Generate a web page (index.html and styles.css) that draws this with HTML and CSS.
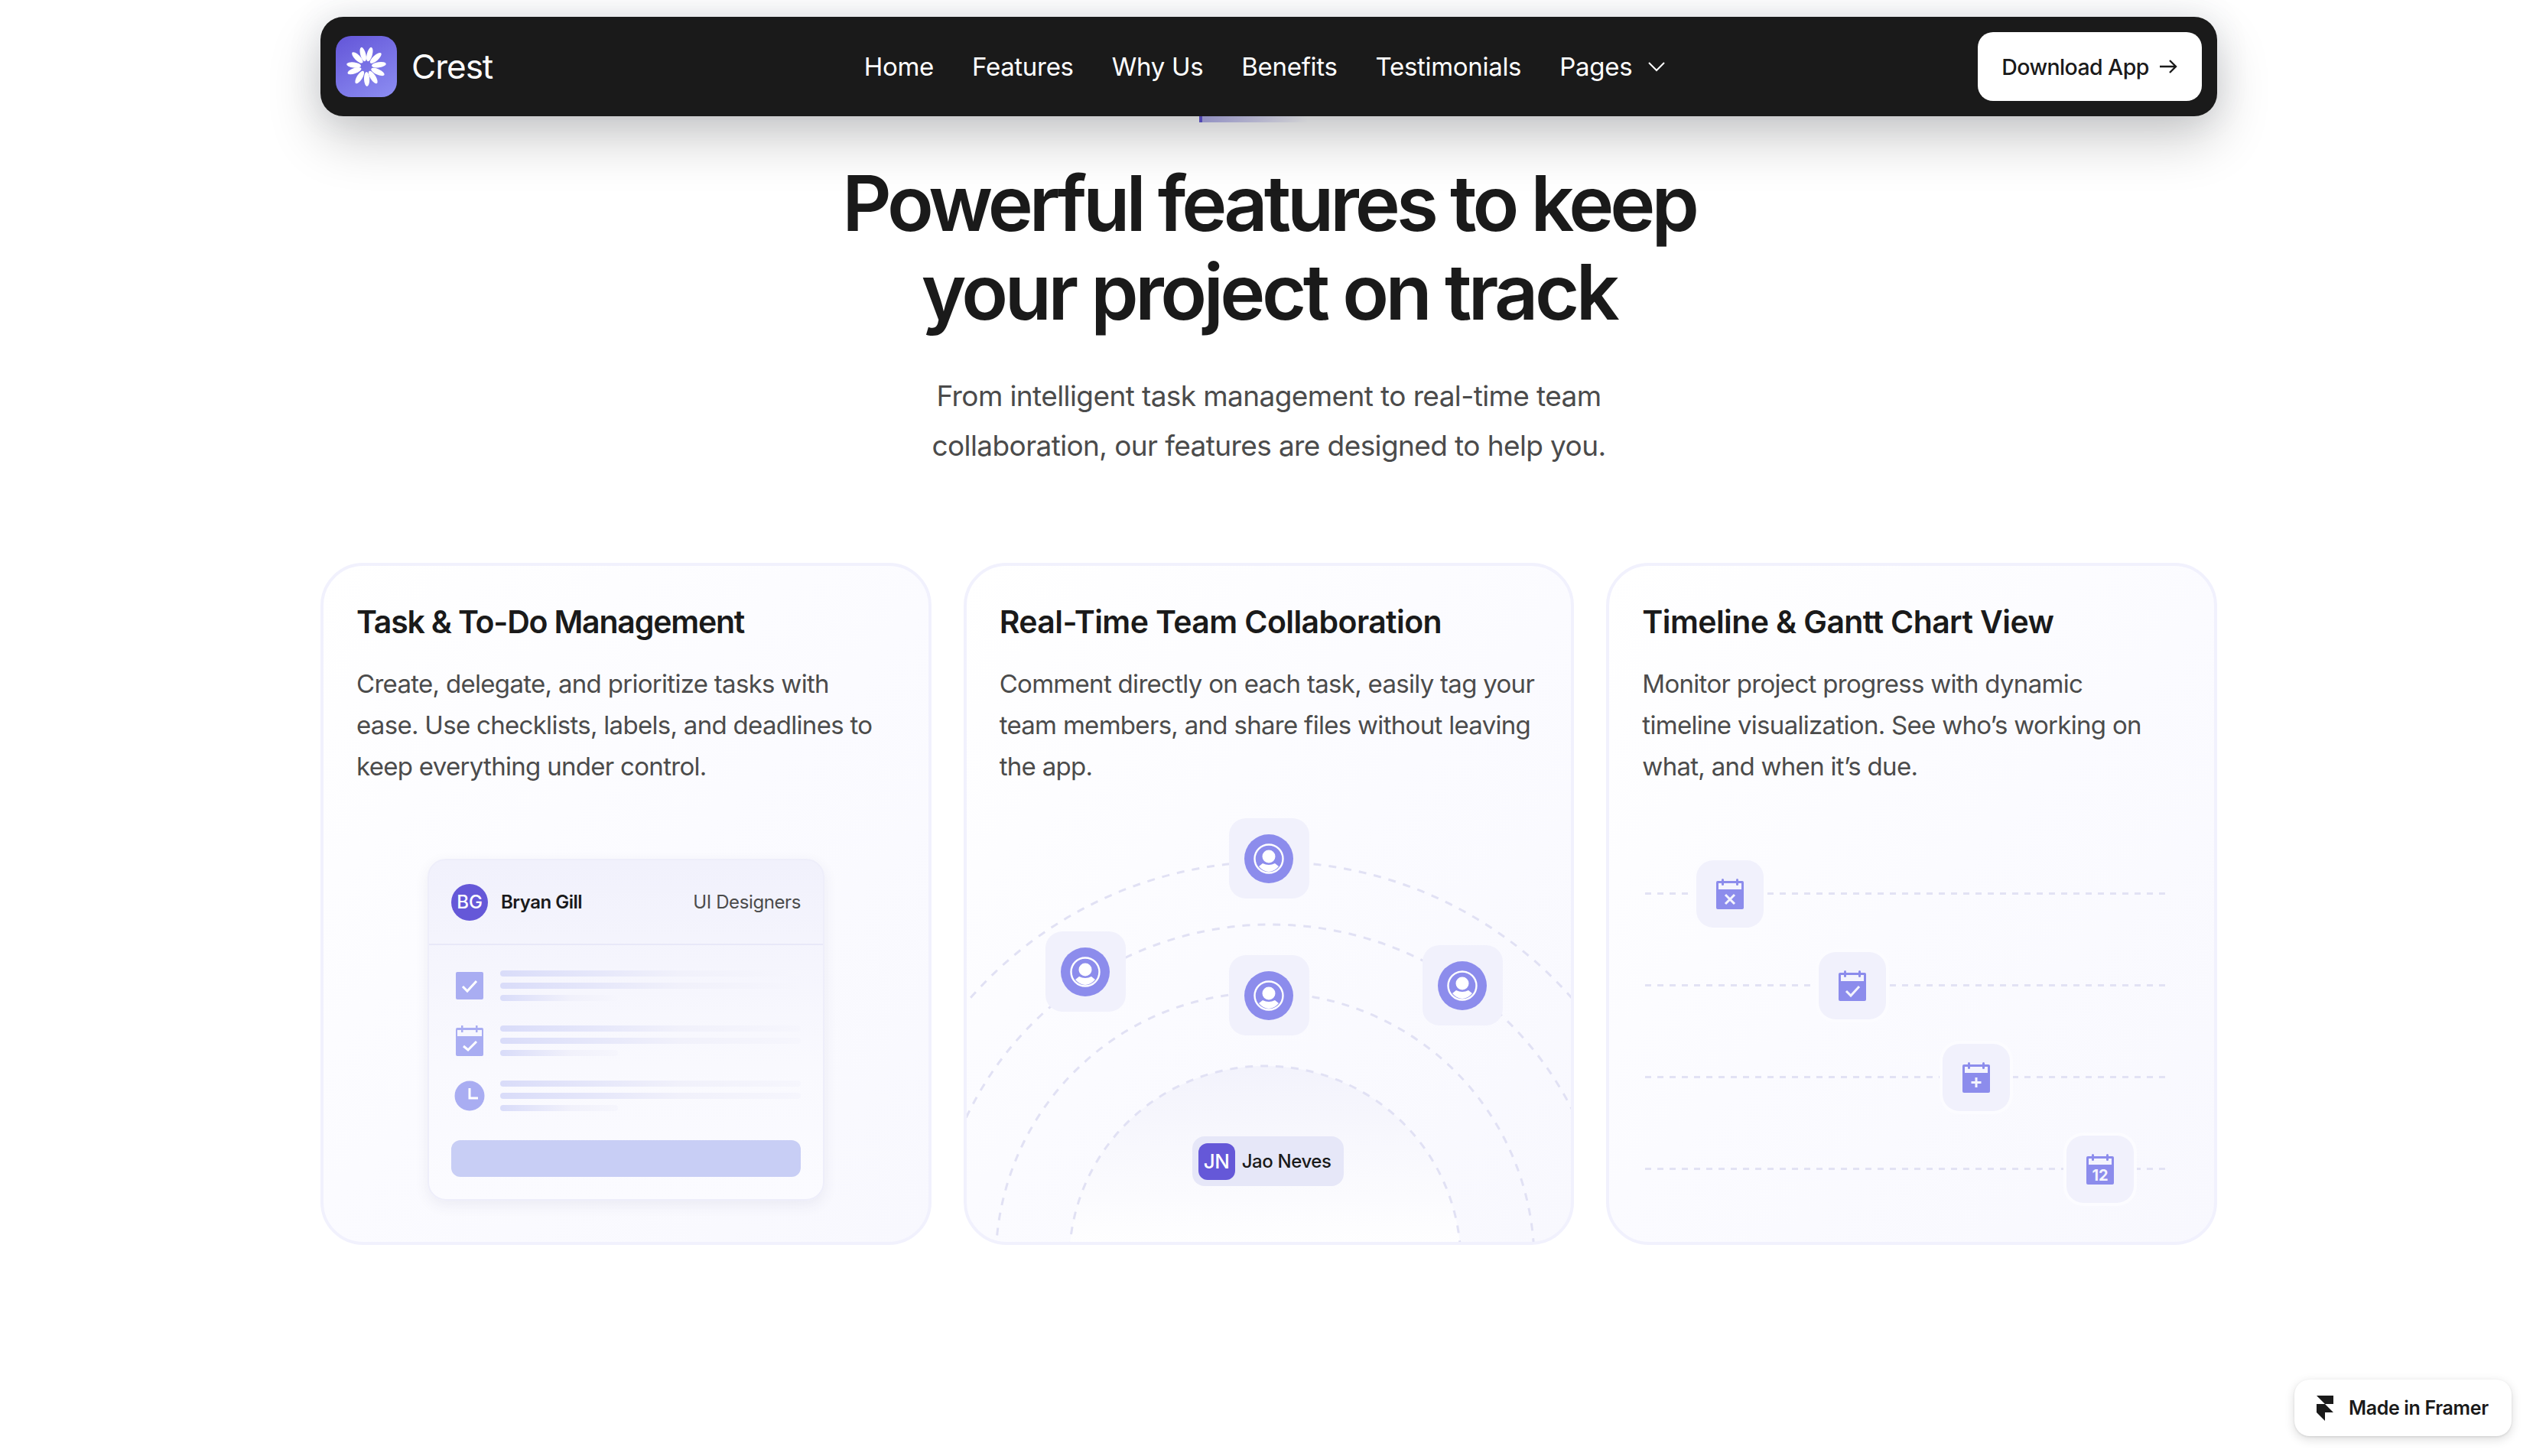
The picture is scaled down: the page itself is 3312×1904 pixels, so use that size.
FILE: index.html
```html
<!DOCTYPE html>
<html lang="en">
<head>
    <meta charset="UTF-8">
    <meta name="viewport" content="width=device-width, initial-scale=1.0">
    <title>Crest</title>
    <link rel="stylesheet" href="styles.css">
</head>
<body>
    <svg class="defs" width="0" height="0">
        <defs>
            <ellipse id="petal" cx="40" cy="23.500" rx="3.600" ry="9.500" fill="#fff"/>
            <symbol id="person" viewBox="0 0 64 64">
                <circle cx="32" cy="32" r="32" fill="#8c8cec"/>
                <circle cx="32" cy="32" r="18.500" fill="none" stroke="#fff" stroke-width="2.400"/>
                <circle cx="32" cy="29" r="8.500" fill="#fff"/>
                <path d="M19 42 L24 38 Q32 42 40 38 L45 42 Q39 49 32 49 Q25 49 19 42Z" fill="#fff"/>
            </symbol>
            <symbol id="calendar" viewBox="0 0 36 40">
                <path d="M2 3h32a2 2 0 0 1 2 2v33a2 2 0 0 1-2 2H2a2 2 0 0 1-2-2V5a2 2 0 0 1 2-2z" fill="#8c8cec"/>
                <rect x="3" y="6" width="30" height="8" fill="#f4f4fd"/>
                <rect x="7" y="0" width="3" height="9" rx="1.500" fill="#8c8cec"/>
                <rect x="26" y="0" width="3" height="9" rx="1.500" fill="#8c8cec"/>
            </symbol>
        </defs>
    </svg>

    <header class="nav">
        <a class="brand">
            <span class="brand-mark">
                <svg width="80" height="80" viewBox="0 0 80 80">
                    <use href="#petal" transform="rotate(-15 40 40)"/>
                    <use href="#petal" transform="rotate(15 40 40)"/>
                    <use href="#petal" transform="rotate(48 40 40)"/>
                    <use href="#petal" transform="rotate(82 40 40)"/>
                    <use href="#petal" transform="rotate(115 40 40)"/>
                    <use href="#petal" transform="rotate(148 40 40)"/>
                    <use href="#petal" transform="rotate(178 40 40)"/>
                    <use href="#petal" transform="rotate(212 40 40)"/>
                    <use href="#petal" transform="rotate(250 40 40)"/>
                    <use href="#petal" transform="rotate(277 40 40)"/>
                    <use href="#petal" transform="rotate(315 40 40)"/>
                </svg>
            </span>
            <span class="brand-name">Crest</span>
        </a>
        <nav class="nav-links">
            <a>Home</a>
            <a>Features</a>
            <a>Why Us</a>
            <a>Benefits</a>
            <a>Testimonials</a>
            <a class="has-caret">Pages
                <svg width="24" height="24" viewBox="0 0 24 24"><path d="M2 7l10 10 10-10" fill="none" stroke="#fff" stroke-width="2"/></svg>
            </a>
        </nav>
        <a class="download">Download App
            <svg width="26" height="24" viewBox="0 0 26 24"><path d="M2 12h21M15 4l8 8-8 8" fill="none" stroke="#1a1a1a" stroke-width="2.400"/></svg>
        </a>
    </header>

    <main class="features">
        <div class="tag"></div>
        <h1>Powerful features to keep<br><span class="h1-second">your project on track</span></h1>
        <p class="lead">From intelligent task management to real-time team<br>collaboration, our features are designed to help you.</p>

        <div class="cards">
            <article class="card card-tasks">
                <h3>Task &amp; To-Do Management</h3>
                <p>Create, delegate, and prioritize tasks with<br>ease. Use checklists, labels, and deadlines to<br>keep everything under control.</p>
                <div class="art art-tasks">
                    <div class="task-card">
                        <div class="task-head">
                            <span class="avatar">BG</span>
                            <span class="task-name">Bryan Gill</span>
                            <span class="task-role">UI Designers</span>
                        </div>
                        <div class="task-rows">
                            <div class="task-row">
                                <svg class="task-icon" width="40" height="40" viewBox="0 0 40 40"><rect x="2" y="2" width="36" height="36" rx="2" fill="#a9adf2"/><path d="M11 21l6 6 12-13" fill="none" stroke="#fff" stroke-width="3"/></svg>
                                <div class="lines"><i></i><i></i><i class="short"></i></div>
                            </div>
                            <div class="task-row">
                                <svg class="task-icon" width="40" height="40" viewBox="0 0 40 40"><path d="M4 3h32a2 2 0 0 1 2 2v33a2 2 0 0 1-2 2H4a2 2 0 0 1-2-2V5a2 2 0 0 1 2-2z" fill="#a9adf2"/><rect x="4" y="6" width="32" height="8" fill="#f6f6fe"/><rect x="9" y="0" width="2.500" height="9" fill="#a9adf2"/><rect x="28" y="0" width="2.500" height="9" fill="#a9adf2"/><path d="M12 27l6 5 11-11" fill="none" stroke="#fff" stroke-width="3"/></svg>
                                <div class="lines"><i></i><i></i><i class="short"></i></div>
                            </div>
                            <div class="task-row">
                                <svg class="task-icon" width="40" height="40" viewBox="0 0 40 40"><circle cx="20" cy="20" r="19.500" fill="#a9adf2"/><path d="M20 10v13h11" fill="none" stroke="#fff" stroke-width="3"/></svg>
                                <div class="lines"><i></i><i></i><i class="short"></i></div>
                            </div>
                        </div>
                        <div class="task-btn"></div>
                    </div>
                </div>
            </article>

            <article class="card">
                <h3>Real-Time Team Collaboration</h3>
                <p>Comment directly on each task, easily tag your<br>team members, and share files without leaving<br>the app.</p>
                <div class="art art-team">
                    <svg class="orbits" width="796" height="892" viewBox="0 0 796 892">
                        <defs>
                            <linearGradient id="dome" x1="0" y1="0" x2="0" y2="1">
                                <stop offset="0" stop-color="#f3f3fc"/>
                                <stop offset="0.500" stop-color="#ffffff"/>
                            </linearGradient>
                        </defs>
                        <g fill="none" stroke="#e1e1f4" stroke-width="3" stroke-dasharray="10 10">
                            <circle cx="398" cy="910" r="523"/>
                            <circle cx="398" cy="910" r="441"/>
                            <circle cx="390" cy="910" r="352"/>
                            <circle cx="390" cy="910" r="256" fill="url(#dome)"/>
                        </g>
                    </svg>
                    <span class="tile tile-a"><svg width="64" height="64"><use href="#person"/></svg></span>
                    <span class="tile tile-b"><svg width="64" height="64"><use href="#person"/></svg></span>
                    <span class="tile tile-c"><svg width="64" height="64"><use href="#person"/></svg></span>
                    <span class="tile tile-d"><svg width="64" height="64"><use href="#person"/></svg></span>
                    <span class="person-pill"><b>JN</b>Jao Neves</span>
                </div>
            </article>

            <article class="card">
                <h3>Timeline &amp; Gantt Chart View</h3>
                <p>Monitor project progress with dynamic<br>timeline visualization. See who&rsquo;s working on<br>what, and when it&rsquo;s due.</p>
                <div class="art art-time">
                    <div class="track"><span class="cal cal-1">
                        <svg width="36" height="40" viewBox="0 0 36 40"><use href="#calendar" width="36" height="40"/><path d="M12 21l12 12M24 21l-12 12" stroke="#f4f4fd" stroke-width="3"/></svg>
                    </span></div>
                    <div class="track"><span class="cal cal-2">
                        <svg width="36" height="40" viewBox="0 0 36 40"><use href="#calendar" width="36" height="40"/><path d="M10 27l6 6 11-12" fill="none" stroke="#f4f4fd" stroke-width="3"/></svg>
                    </span></div>
                    <div class="track"><span class="cal cal-3">
                        <svg width="36" height="40" viewBox="0 0 36 40"><use href="#calendar" width="36" height="40"/><path d="M18 20v13M11.500 26.500h13" stroke="#f4f4fd" stroke-width="3"/></svg>
                    </span></div>
                    <div class="track"><span class="cal cal-4">
                        <svg width="36" height="40" viewBox="0 0 36 40"><use href="#calendar" width="36" height="40"/><text x="18" y="35" text-anchor="middle" class="cal-day">12</text></svg>
                    </span></div>
                </div>
            </article>
        </div>
    </main>

    <a class="framer-badge">
        <svg width="22" height="33" viewBox="0 0 22 33"><path d="M0 0h22v11H11zM0 11h11l11 11H11v11L0 22z" fill="#1a1a1a"/></svg>
        Made in Framer
    </a>
</body>
</html>
```

FILE: styles.css
```css
* {
    box-sizing: border-box;
}
html, body {
    margin: 0;
    padding: 0;
    height: 100%;
    overflow: hidden;
}
body {
    background: #fff;
    color: #1a1a1a;
    font-family: Inter, "Noto Sans", sans-serif;
    position: relative;
}
.defs {
    position: absolute;
}

/* nav */
.nav {
    position: relative;
    z-index: 2;
    width: 2480px;
    height: 130px;
    margin: 22px 0 0 419px;
    padding: 0 20px;
    display: grid;
    grid-template-columns: 1fr auto 1fr;
    align-items: center;
    background: #1a1a1a;
    border-radius: 30px;
    box-shadow: 0 30px 70px rgba(0, 0, 0, .2), 0 0 44px rgba(60, 70, 110, .12);
}
.brand {
    display: flex;
    align-items: center;
    gap: 19px;
}
.brand-mark {
    width: 80px;
    height: 80px;
    border-radius: 20px;
    background: linear-gradient(150deg, #6355d8, #8d8ef2);
    display: block;
}
.brand-mark svg {
    display: block;
}
.brand-name {
    color: #fff;
    font-size: 44px;
    font-weight: 400;
    letter-spacing: -1px;
}
.nav-links {
    display: flex;
    align-items: center;
    gap: 50px;
    margin-left: -10px;
}
.nav-links a {
    color: #fff;
    font-size: 33px;
    font-weight: 400;
    letter-spacing: -.3px;
}
.has-caret {
    display: flex;
    align-items: center;
    gap: 20px;
}
.download {
    justify-self: end;
    width: 293px;
    height: 90px;
    display: flex;
    align-items: center;
    justify-content: center;
    gap: 12px;
    background: #fff;
    border-radius: 20px;
    color: #1a1a1a;
    font-size: 28.500px;
    font-weight: 500;
    letter-spacing: -.6px;
}

/* features */
.features {
    width: 2480px;
    margin: 0 0 0 419px;
}
.tag {
    width: 142px;
    height: 8px;
    margin-left: 1149px;
    background: linear-gradient(90deg, #6558d8 4px, #b4b1ec 4px, rgba(200, 198, 240, 0));
}
h1 {
    margin: 48px 0 0;
    text-align: center;
    font-size: 100px;
    line-height: 116px;
    font-weight: 600;
    letter-spacing: -5px;
    color: #1a1a1a;
}
.h1-second {
    letter-spacing: -4.500px;
}
.lead {
    margin: 45px 0 0;
    text-align: center;
    font-size: 37px;
    line-height: 65px;
    color: #4b4b4b;
    letter-spacing: -.6px;
}
.cards {
    margin-top: 121px;
    display: grid;
    grid-template-columns: repeat(3, 1fr);
    gap: 42px;
}
.card {
    position: relative;
    height: 892px;
    padding: 46px 40px 0 43px;
    border: 4px solid #f1f1fd;
    border-radius: 56px;
    background: linear-gradient(135deg, #fff 0%, #fbfbff 50%, #f8f8fe 100%);
    overflow: hidden;
}
.card h3 {
    margin: 0;
    font-size: 41px;
    line-height: 54px;
    font-weight: 600;
    letter-spacing: -.6px;
    color: #1a1a1a;
}
.card-tasks h3 {
    letter-spacing: -1.2px;
}
.card p {
    margin: 27px 0 0;
    font-size: 33px;
    line-height: 54px;
    color: #4b4b4b;
    letter-spacing: -.7px;
}

/* illustrations sit on the card as a free canvas */
.art {
    position: absolute;
    left: 0;
    top: 0;
    width: 100%;
    height: 100%;
}

/* task widget */
.task-card {
    position: absolute;
    left: 136px;
    top: 383px;
    width: 519px;
    height: 447px;
    border: 2px solid #eeeefa;
    border-radius: 24px;
    background: linear-gradient(180deg, #f1f1fc 0%, #f9f9fe 60%, #fbfbff 100%);
    box-shadow: 0 6px 18px rgba(60, 60, 110, .08);
    display: flex;
    flex-direction: column;
}
.task-head {
    height: 111px;
    padding: 0 29px;
    display: flex;
    align-items: center;
    border-bottom: 2px solid #e8e8f8;
}
.avatar {
    width: 48px;
    height: 48px;
    border-radius: 50%;
    background: #6558d8;
    color: #fff;
    font-size: 24px;
    font-weight: 500;
    display: flex;
    align-items: center;
    justify-content: center;
}
.task-name {
    margin-left: 17px;
    font-size: 24px;
    font-weight: 600;
    letter-spacing: -.5px;
    color: #1a1a1a;
}
.task-role {
    margin-left: auto;
    font-size: 24px;
    color: #4b4b4b;
    letter-spacing: -.4px;
}
.task-rows {
    padding: 33px 29px 0;
    display: flex;
    flex-direction: column;
    gap: 32px;
}
.task-row {
    height: 40px;
    display: flex;
    align-items: center;
    gap: 16px;
}
.task-icon {
    flex: none;
    margin: 0 4px;
}
.lines {
    flex: 1;
    display: flex;
    flex-direction: column;
    gap: 8px;
    margin-top: -1px;
}
.lines i {
    display: block;
    height: 8px;
    border-radius: 4px;
    background: linear-gradient(90deg, #d9dcf9, #f1f1fb 60%, #f6f6fd);
}
.lines i.short {
    width: 154px;
}
.task-btn {
    margin: 38px 29px 0;
    height: 48px;
    border-radius: 12px;
    background: #c8cef5;
}

/* team */
.orbits {
    position: absolute;
    left: 0;
    top: 0;
}
.tile {
    position: absolute;
    width: 105px;
    height: 105px;
    border-radius: 22px;
    background: #f1f1fc;
    display: flex;
    align-items: center;
    justify-content: center;
}
.tile svg {
    display: block;
}
.tile-a { left: 343px; top: 330px; }
.tile-b { left: 103px; top: 478px; }
.tile-c { left: 343px; top: 509px; }
.tile-d { left: 596px; top: 496px; }
.person-pill {
    position: absolute;
    left: 295px;
    top: 746px;
    width: 198px;
    height: 65px;
    padding-left: 8px;
    display: flex;
    align-items: center;
    gap: 9px;
    border-radius: 16px;
    background: #e6e7f8;
    color: #1a1a1a;
    font-size: 24px;
    font-weight: 500;
    letter-spacing: -.4px;
}
.person-pill b {
    width: 48px;
    height: 48px;
    border-radius: 12px;
    background: #6558d8;
    color: #fff;
    font-size: 26px;
    font-weight: 500;
    display: flex;
    align-items: center;
    justify-content: center;
}

/* timeline */
.art-time {
    padding: 427px 61px 0 47px;
    display: flex;
    flex-direction: column;
    gap: 117px;
}
.track {
    position: relative;
    height: 3px;
    background: repeating-linear-gradient(90deg, #e2e2f4 0 8px, transparent 8px 16px);
}
.cal {
    position: absolute;
    top: -42px;
    width: 88px;
    height: 88px;
    border-radius: 22px;
    background: #f1f1fc;
    box-shadow: 0 0 0 4px #fcfcff;
    display: flex;
    align-items: center;
    justify-content: center;
}
.cal svg {
    display: block;
}
.cal-1 { left: 67px; }
.cal-2 { left: 227px; }
.cal-3 { left: 389px; }
.cal-4 { left: 551px; }
.cal-day {
    fill: #f4f4fd;
    font-family: Inter, sans-serif;
    font-size: 20px;
    font-weight: 700;
}

/* badge */
.framer-badge {
    position: absolute;
    left: 3000px;
    top: 1804px;
    width: 284px;
    height: 74px;
    padding-left: 29px;
    display: flex;
    align-items: center;
    gap: 20px;
    background: #fff;
    border-radius: 20px;
    box-shadow: 0 4px 14px rgba(0, 0, 0, .14), 0 1px 3px rgba(0, 0, 0, .1);
    font-size: 25px;
    font-weight: 600;
    letter-spacing: -.35px;
    color: #1a1a1a;
}
```
